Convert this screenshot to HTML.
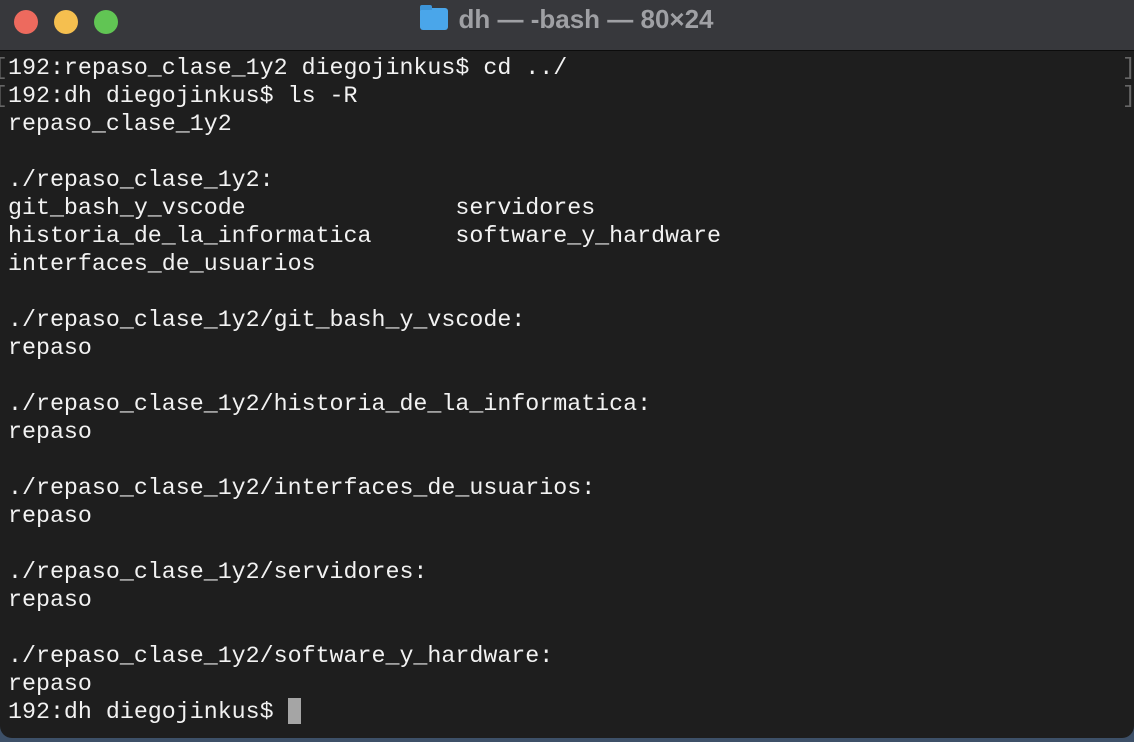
<!DOCTYPE html>
<html><head><meta charset="utf-8"><style>
html,body{margin:0;padding:0;width:1134px;height:742px;overflow:hidden;background:#3d5068;}
.win{position:absolute;left:0;top:0;width:1134px;height:738px;background:#1e1e1e;border-radius:0 0 12px 12px;overflow:hidden;}
.tb{position:absolute;left:0;top:0;width:1134px;height:50px;background:#37383c;border-bottom:1px solid #0c0c0c;}
.dot{position:absolute;top:10px;width:24px;height:24px;border-radius:50%;}
.title{position:absolute;top:4px;left:0;width:1134px;text-align:center;font:bold 26px "Liberation Sans",sans-serif;color:#9fa0a4;}
.folder{display:inline-block;width:28px;height:22px;background:#4aa6ea;border-radius:3px;vertical-align:-2px;margin-right:10px;position:relative;}
.folder:before{content:"";position:absolute;left:0;top:-3px;width:12px;height:5px;background:#3d95d9;border-radius:2px 2px 0 0;}
pre{position:absolute;left:8px;top:54px;margin:0;font:23.3px/28px "Liberation Mono",monospace;color:#f2f2f2;}
.br{position:absolute;font:23px/28px "Liberation Mono",monospace;color:#666;}
.cur{display:inline-block;width:13px;height:26px;background:#a5a5a5;vertical-align:-6px;}
</style></head><body>
<div class="win">
<div class="tb">
<div class="dot" style="left:14px;background:#ed6a5e"></div>
<div class="dot" style="left:54px;background:#f5bf4f"></div>
<div class="dot" style="left:94px;background:#61c554"></div>
<div class="title"><span class="folder"></span>dh — -bash — 80×24</div>
</div>
<div class="br" style="left:-6px;top:54px">[</div>
<div class="br" style="left:-6px;top:82px">[</div>
<div class="br" style="left:1122px;top:54px">]</div>
<div class="br" style="left:1122px;top:82px">]</div>
<pre>192:repaso_clase_1y2 diegojinkus$ cd ../
192:dh diegojinkus$ ls -R
repaso_clase_1y2

./repaso_clase_1y2:
git_bash_y_vscode               servidores
historia_de_la_informatica      software_y_hardware
interfaces_de_usuarios

./repaso_clase_1y2/git_bash_y_vscode:
repaso

./repaso_clase_1y2/historia_de_la_informatica:
repaso

./repaso_clase_1y2/interfaces_de_usuarios:
repaso

./repaso_clase_1y2/servidores:
repaso

./repaso_clase_1y2/software_y_hardware:
repaso
192:dh diegojinkus$ <span class="cur"></span></pre>
</div>
</body></html>
